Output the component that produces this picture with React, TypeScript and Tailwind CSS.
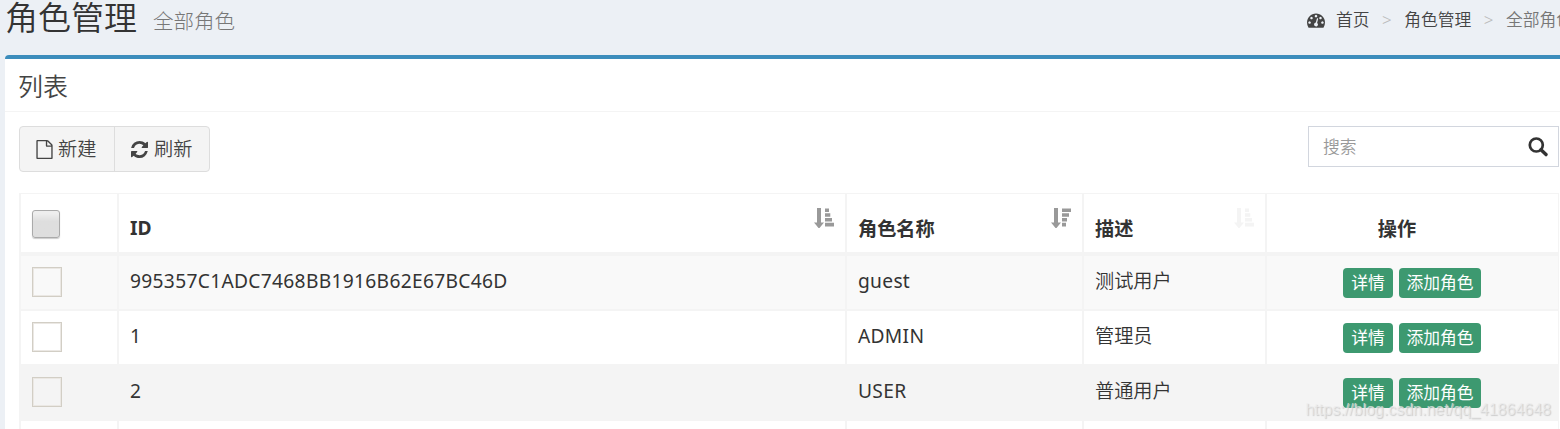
import React from 'react';

type SvgProps = { className?: string };

const DashboardIcon = ({ className }: SvgProps) => (
  <svg viewBox="0 0 1792 1792" fill="currentColor" className={className}>
    <path d="M384 1152q0-53-37.5-90.5t-90.5-37.5-90.5 37.5-37.5 90.5 37.5 90.5 90.5 37.5 90.5-37.5 37.5-90.5zm192-448q0-53-37.5-90.5t-90.5-37.5-90.5 37.5-37.5 90.5 37.5 90.5 90.5 37.5 90.5-37.5 37.5-90.5zm428 481l101-382q6-26-7.5-48.5t-38.5-29.5-48 6.5-30 39.5l-101 382q-60 5-107 43.5t-63 98.5q-20 77 20 146t117 89 146-20 89-117q16-60-6-117t-72-91zm660-33q0-53-37.5-90.5t-90.5-37.5-90.5 37.5-37.5 90.5 37.5 90.5 90.5 37.5 90.5-37.5 37.5-90.5zm-640-640q0-53-37.5-90.5t-90.5-37.5-90.5 37.5-37.5 90.5 37.5 90.5 90.5 37.5 90.5-37.5 37.5-90.5zm448 192q0-53-37.5-90.5t-90.5-37.5-90.5 37.5-37.5 90.5 37.5 90.5 90.5 37.5 90.5-37.5 37.5-90.5zm320 448q0 261-141 483-19 29-54 29h-1402q-35 0-54-29-141-221-141-483 0-182 71-348t191-286 286-191 348-71 348 71 286 191 191 286 71 348z" />
  </svg>
);

const FileIcon = ({ className }: SvgProps) => (
  <svg viewBox="128 0 1536 1792" fill="currentColor" className={className}>
    <path d="M1596 380q28 28 48 76t20 88v1152q0 40-28 68t-68 28h-1344q-40 0-68-28t-28-68v-1600q0-40 28-68t68-28h896q40 0 88 20t76 48zm-444-244v376h376q-10-29-22-41l-313-313q-12-12-41-22zm384 1528v-1024h-416q-40 0-68-28t-28-68v-416h-768v1536h1280z" />
  </svg>
);

const RefreshIcon = ({ className }: SvgProps) => (
  <svg viewBox="128 128 1536 1536" fill="currentColor" className={className}>
    <path d="M1639 1056q0 5-1 7-64 268-268 434.500t-478 166.500q-146 0-282.500-55t-243.500-157l-129 129q-19 19-45 19t-45-19-19-45v-448q0-26 19-45t45-19h448q26 0 45 19t19 45-19 45l-137 137q71 66 161 102t187 36q134 0 250-65t186-179q11-17 53-117 8-23 30-23h192q13 0 22.500 9.500t9.500 22.500zm25-800v448q0 26-19 45t-45 19h-448q-26 0-45-19t-19-45 19-45l138-138q-148-137-349-137-134 0-250 65t-186 179q-11 17-53 117-8 23-30 23h-199q-13 0-22.500-9.500t-9.500-22.500v-7q65-268 270-434.500t480-166.500q146 0 284 55.500t245 156.500l130-129q19-19 45-19t45 19 19 45z" />
  </svg>
);

const SearchIcon = ({ className }: SvgProps) => (
  <svg viewBox="0 0 20 20" fill="none" stroke="currentColor" className={className}>
    <circle cx="8.300" cy="8" r="6.500" strokeWidth="2.700" />
    <path d="M13 12.800l5 4.800" strokeWidth="3.400" strokeLinecap="round" />
  </svg>
);

const SortIcon = ({ descending, className }: SvgProps & { descending?: boolean }) => (
  <svg viewBox="0 0 20 20" fill="currentColor" className={className}>
    <path d="M3 0h4v14.500h3L5.500 20h-1L0 14.500h3z" />
    {descending ? (
      <path d="M11 .500h9v3.500h-9zM11 5.200h7v3.600h-7zM11 10h5v3.600h-5zM11 14.800h4v3.700h-4z" />
    ) : (
      <path d="M11 .500h4v3.500h-4zM11 5.200h5.300v3.600h-5.300zM11 10h7v3.600h-7zM11 14.800h9v3.700h-9z" />
    )}
  </svg>
);

const COLS = 'grid grid-cols-[98px_728px_237px_183px_292px]';

const rows = [
  { id: '995357C1ADC7468BB1916B62E67BC46D', name: 'guest', desc: '测试用户', bg: 'bg-[#f9f9f9]' },
  { id: '1', name: 'ADMIN', desc: '管理员', bg: 'bg-white' },
  { id: '2', name: 'USER', desc: '普通用户', bg: 'bg-[#f4f4f4]' },
];

function Row({ id, name, desc, bg }: { id: string; name: string; desc: string; bg: string }) {
  const cell = 'border-r-2 border-[#f4f4f4] pl-[11px] pt-[11px] leading-7';
  return (
    <div className={`${COLS} ${bg} h-[55px] border-b-2 border-[#f4f4f4]`}>
      <div className="border-r-2 border-[#f4f4f4] pl-[11px] pt-[11px]">
        <div className="h-[30px] w-[30px] border border-[#d2cec5] shadow-[inset_0_0_0_1px_#ebe8e4]" />
      </div>
      <div className={`${cell} tracking-[0.310px]`}>{id}</div>
      <div className={`${cell} tracking-[0.300px]`}>{name}</div>
      <div className={`${cell} font-[350]`}>{desc}</div>
      <div className="flex items-start justify-center gap-1.5 pr-[2px] pt-3 text-[16.800px] leading-[30px] text-white">
        <span className="w-[50px] rounded-[4px] bg-[#3d9970] text-center">详情</span>
        <span className="w-[82px] rounded-[4px] bg-[#3d9970] text-center">添加角色</span>
      </div>
    </div>
  );
}

export default function App() {
  return (
    <div className="relative h-[429px] w-[1560px] overflow-hidden bg-[#ecf0f5] font-['Noto_Sans','Noto_Sans_CJK_SC',sans-serif] text-[19.200px] text-[#333]">
      <header className="flex h-[55px] justify-between whitespace-nowrap">
        <h1 className="flex h-9 pl-[5px] text-[33px] font-[350] leading-9 text-[#333]">
          角色管理
          <small className="pl-4 pt-[5px] text-[20.500px] font-light leading-8 text-[#777]">全部角色</small>
        </h1>
        <nav className="flex h-10 w-[253px] shrink-0 items-center text-[16.800px] font-[350] text-[#444]">
          <DashboardIcon className="h-[18px] w-[18px] shrink-0" />
          <span className="ml-[11px]">首页</span>
          <span className="mx-[12.500px] text-[#bbb]">&gt;</span>
          <span>角色管理</span>
          <span className="mx-[12.500px] text-[#bbb]">&gt;</span>
          <span className="text-[#777]">全部角色</span>
        </nav>
      </header>

      <main className="ml-[5px] h-[374px] rounded-tl-[4px] border-t-4 border-[#3c8dbc] bg-white">
        <div className="flex h-[53px] items-center border-b border-[#f4f4f4] pl-[13px] pt-[3px] text-[25px] font-[350] text-[#444]">
          列表
        </div>
        <div className="flex h-[81px] justify-between pl-[14px] pr-px pt-[14px]">
          <div className="flex h-[46px] w-[191px] overflow-hidden rounded-[4px] border border-[#ddd] bg-[#f4f4f4] font-[350] text-[#444]">
            <button className="flex w-[95px] items-center border-r border-[#ddd] pl-4">
              <FileIcon className="mr-[5px] h-[19px] w-[17px]" />
              新建
            </button>
            <button className="flex flex-1 items-center pl-4">
              <RefreshIcon className="mr-[6px] h-[17px] w-[17px]" />
              刷新
            </button>
          </div>
          <div className="flex h-[41px] w-[251px] items-center justify-between border border-[#d2d6de] pl-[14px] pr-[10px] text-[16.800px] font-[350] text-[#999]">
            搜索
            <SearchIcon className="h-5 w-5 text-[#333]" />
          </div>
        </div>

        <div className="ml-[14px] w-[1540px] border-l-2 border-r border-t border-[#f4f4f4]">
          <div className={`${COLS} h-[62px] border-b-4 border-[#f4f4f4] font-bold leading-7`}>
            <div className="border-r-2 border-[#f4f4f4] pl-[11px] pt-4">
              <div className="h-7 w-7 rounded-[3px] border border-[#aaa] bg-gradient-to-b from-[#eee] from-10% to-[#dedede] to-40% shadow-[0_1px_1px_#ccc]" />
            </div>
            <div className="flex justify-between border-r-2 border-[#f4f4f4] pl-[11px] pr-[11px]">
              <span className="pt-5">ID</span>
              <SortIcon className="mt-[14px] h-5 w-5 text-[#999]" />
            </div>
            <div className="flex justify-between border-r-2 border-[#f4f4f4] pl-[11px] pr-[11px]">
              <span className="pt-[21px]">角色名称</span>
              <SortIcon descending className="mt-[14px] h-5 w-5 text-[#999]" />
            </div>
            <div className="flex justify-between border-r-2 border-[#f4f4f4] pl-[11px] pr-[11px]">
              <span className="pt-[21px]">描述</span>
              <SortIcon className="mt-[14px] h-5 w-5 text-[#f4f4f4]" />
            </div>
            <div className="pr-8 pt-[21px] text-center">操作</div>
          </div>
          {rows.map((row) => (
            <Row key={row.id} {...row} />
          ))}
          <div className={`${COLS} h-[9px] bg-white`}>
            <div className="border-r-2 border-[#f4f4f4]" />
            <div className="border-r-2 border-[#f4f4f4]" />
            <div className="border-r-2 border-[#f4f4f4]" />
            <div className="border-r-2 border-[#f4f4f4]" />
          </div>
        </div>
      </main>

      <div className="absolute bottom-[9px] right-[9px] font-['Liberation_Sans',sans-serif] text-[16px] leading-5 text-[#ececec]/70 [text-shadow:1px_1px_1px_#ccc]">
        https://blog.csdn.net/qq_41864648
      </div>
    </div>
  );
}
